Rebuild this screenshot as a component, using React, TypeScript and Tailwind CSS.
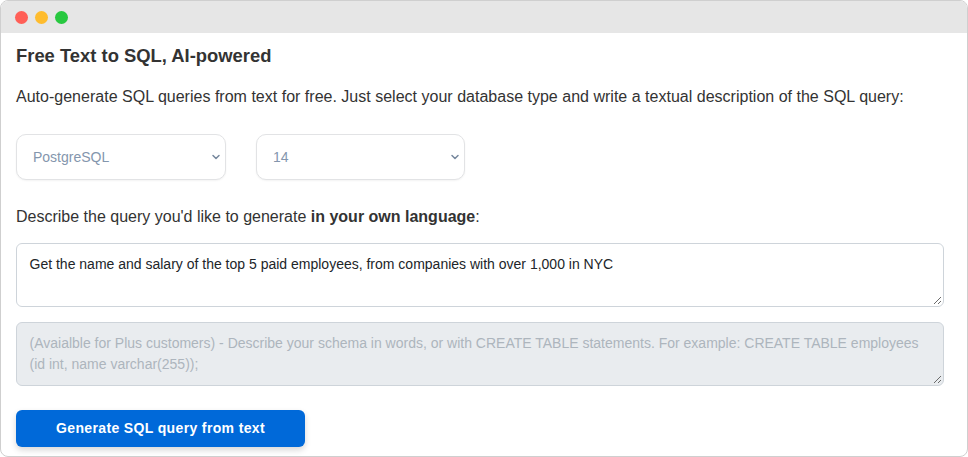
import { ChevronDown } from "lucide-react";

const font = "font-['Liberation_Sans',Arial,sans-serif]";

function FakeSelect({ label, width }: { label: string; width: string }) {
  return (
    <div className={`${width} h-[46px] flex items-center justify-between pl-[16px] pr-[3px] rounded-[10px] border border-[#e2e3e5] bg-white shadow-[0_1px_2px_rgba(0,0,0,0.05)] text-[14px] text-[#8496ad]`}>
      <span>{label}</span>
      <ChevronDown className="w-[12px] h-[12px] text-[#77889e]" strokeWidth={3} />
    </div>
  );
}

function Grip() {
  return (
    <svg className="absolute right-[1px] bottom-[1px]" width="9" height="9" viewBox="0 0 9 9">
      <path d="M1 8L8 1M5 8L8 5" stroke="#6b6b6b" strokeWidth="1" fill="none" />
    </svg>
  );
}

export default function App() {
  return (
    <div className={`${font} w-[968px] h-[457px] overflow-hidden bg-white text-[#333333]`}>
      <div className="h-full flex flex-col rounded-[8px] border border-[#cfcfcf] overflow-hidden">
        <div className="h-[32px] shrink-0 bg-[#e6e6e6] flex items-center gap-[7px] pl-[14px] pt-[1px]">
          <span className="w-[13px] h-[13px] rounded-full bg-[#ff5f57]" />
          <span className="w-[13px] h-[13px] rounded-full bg-[#febc2e]" />
          <span className="w-[13px] h-[13px] rounded-full bg-[#28c840]" />
        </div>

        <div className="flex-1 pl-[15px] pr-[23px] flex flex-col">
          <h1 className="mt-[12px] text-[18.4px] leading-[22px] font-bold">Free Text to SQL, AI-powered</h1>
          <p className="mt-[18px] text-[16px] leading-[24px] tracking-[0.01px]">
            Auto-generate SQL queries from text for free. Just select your database type and write a textual description of the SQL query:
          </p>

          <div className="mt-[25px] flex gap-[30px]">
            <FakeSelect label="PostgreSQL" width="w-[210px]" />
            <FakeSelect label="14" width="w-[209px]" />
          </div>

          <p className="mt-[25px] text-[16px] leading-[24px]">
            Describe the query you'd like to generate <b>in your own language</b>:
          </p>

          <div className="relative mt-[14px] h-[64px] rounded-[6px] border border-[#ced4da] bg-white pl-[12.5px] pr-[13px] pt-[10px] text-[14px] leading-[21px] text-[#212529]">
            Get the name and salary of the top 5 paid employees, from companies with over 1,000 in NYC
            <Grip />
          </div>

          <div className="relative mt-[15px] h-[64px] rounded-[6px] border border-[#ced4da] bg-[#e9ecef] pl-[12.5px] pr-[13px] pt-[10px] text-[14px] leading-[21px] text-[#adb5bd]">
            (Avaialble for Plus customers) - Describe your schema in words, or with CREATE TABLE statements. For example: CREATE TABLE employees (id int, name varchar(255));
            <Grip />
          </div>

          <button className="mt-[24px] w-[289px] h-[37px] rounded-[6px] bg-[#0069d9] text-white text-[14px] font-bold tracking-[0.36px] shadow-[0_3px_6px_rgba(0,0,0,0.16)]">
            Generate SQL query from text
          </button>
        </div>
      </div>
    </div>
  );
}
